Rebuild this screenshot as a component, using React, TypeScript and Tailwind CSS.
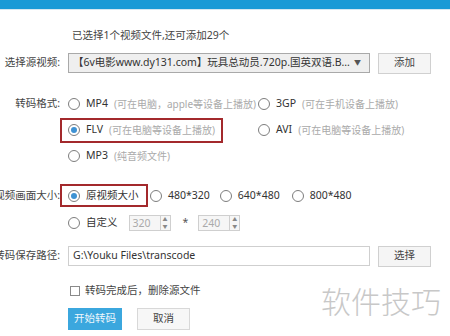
import React from "react";

const Radio: React.FC<{ checked?: boolean }> = ({ checked }) => (
  <span className="w-[12px] h-[12px] rounded-full border border-[#7d7d7d] bg-white flex items-center justify-center shrink-0">
    {checked && <span className="w-[6px] h-[6px] rounded-full bg-[#3e92d3]" />}
  </span>
);

const Option: React.FC<{ label: string; hint?: string; checked?: boolean }> = ({ label, hint, checked }) => (
  <span className="flex items-center gap-[6px] whitespace-nowrap">
    <Radio checked={checked} />
    <span className="text-[#333]">{label}</span>
    {hint && <span className="text-[#aaa] text-[10px]">{hint}</span>}
  </span>
);

const Spin: React.FC<{ value: string }> = ({ value }) => (
  <span className="flex h-[16px] w-[42px] border border-[#cfcfcf] bg-[#f6f6f6]">
    <span className="flex-1 pl-[3px] leading-[14px] text-[#aaa]">{value}</span>
    <span className="w-[10px] border-l border-[#cfcfcf] flex flex-col text-[5px] leading-[7px] text-[#888] items-center">
      <span>▲</span>
      <span>▼</span>
    </span>
  </span>
);

const Label: React.FC<{ text: string; h?: string }> = ({ text, h = "h-[20px]" }) => (
  <div className={`w-[60px] shrink-0 flex items-center justify-end whitespace-nowrap text-[#444] ${h}`}>{text}</div>
);

export default function App() {
  return (
    <div className="relative w-[450px] h-[336px] overflow-hidden bg-white text-[10.5px] font-['Noto_Sans','Noto_Sans_CJK_SC',sans-serif]">
      <div className="h-[10px] bg-[#1a9ad6] border-b border-[#d5e7f1]" />

      <div className="mt-[18px] pl-[72px] h-[14px] leading-[14px] text-[#444]">已选择1个视频文件,还可添加29个</div>

      <div className="mt-[11px] flex items-center h-[20px]">
        <Label text="选择源视频:" />
        <div className="ml-[8px] w-[302px] h-[20px] border border-[#a9a9a9] bg-[#efefef] flex items-center pl-[4px] pr-[8px] text-[#333] whitespace-nowrap">
          <span className="flex-1 overflow-hidden">【6v电影www.dy131.com】玩具总动员.720p.国英双语.B...</span>
          <span className="text-[7px] text-[#555]">▼</span>
        </div>
        <button className="ml-[8px] w-[53px] h-[21px] border border-[#d0d0d0] bg-[#f5f5f5] text-[#444]">添加</button>
      </div>

      <div className="mt-[18px] flex">
        <Label text="转码格式:" h="h-[26px]" />
        <div className="flex flex-col">
          <div className="flex h-[26px] items-center">
            <div className="w-[198px] pl-[8px]"><Option label="MP4" hint="(可在电脑，apple等设备上播放)" /></div>
            <Option label="3GP" hint="(可在手机设备上播放)" />
          </div>
          <div className="flex h-[26px] items-center">
            <div className="w-[198px]">
              <div className="w-[163px] h-[25px] border-2 border-[#a3292c] pl-[6px] flex items-center">
                <Option label="FLV" hint="(可在电脑等设备上播放)" checked />
              </div>
            </div>
            <Option label="AVI" hint="(可在电脑等设备上播放)" />
          </div>
          <div className="flex h-[26px] items-center pl-[8px]">
            <Option label="MP3" hint="(纯音频文件)" />
          </div>
        </div>
      </div>

      <div className="mt-[15px] flex">
        <Label text="视频画面大小:" h="h-[23px]" />
        <div className="flex flex-col">
          <div className="flex h-[23px] items-center">
            <div className="w-[88px] h-[23px] border-2 border-[#a3292c] pl-[6px] flex items-center">
              <Option label="原视频大小" checked />
            </div>
            <div className="ml-[2px]"><Option label="480*320" /></div>
            <div className="ml-[10px]"><Option label="640*480" /></div>
            <div className="ml-[12px]"><Option label="800*480" /></div>
          </div>
          <div className="mt-[3px] flex h-[26px] items-center pl-[8px]">
            <Option label="自定义" />
            <div className="ml-[11px]"><Spin value="320" /></div>
            <span className="ml-[12px] text-[#555]">*</span>
            <div className="ml-[10px]"><Spin value="240" /></div>
          </div>
        </div>
      </div>

      <div className="mt-[10px] flex items-center h-[20px]">
        <Label text="转码保存路径:" />
        <div className="ml-[8px] w-[302px] h-[20px] border border-[#cfcfcf] bg-white flex items-center pl-[4px] text-[#333]">
          G:\Youku Files\transcode
        </div>
        <button className="ml-[8px] w-[53px] h-[21px] border border-[#d0d0d0] bg-[#f5f5f5] text-[#444]">选择</button>
      </div>

      <div className="mt-[18px] pl-[70px] flex items-center gap-[5px] h-[14px]">
        <span className="w-[10px] h-[10px] border border-[#8a8a8a] bg-white" />
        <span className="text-[#444]">转码完成后，删除源文件</span>
      </div>

      <div className="mt-[10px] pl-[68px] flex gap-[15px]">
        <button className="w-[54px] h-[22px] bg-[#3ba7de] text-[#eef7fc]">开始转码</button>
        <button className="w-[53px] h-[22px] border border-[#d8d8d8] bg-[#f7f7f7] text-[#444]">取消</button>
      </div>

      <div className="absolute left-[321px] top-[282px] text-[30px] leading-[36px] text-[#c8c8c8] font-['Noto_Sans_CJK_SC',sans-serif] font-light">软件技巧</div>
    </div>
  );
}
